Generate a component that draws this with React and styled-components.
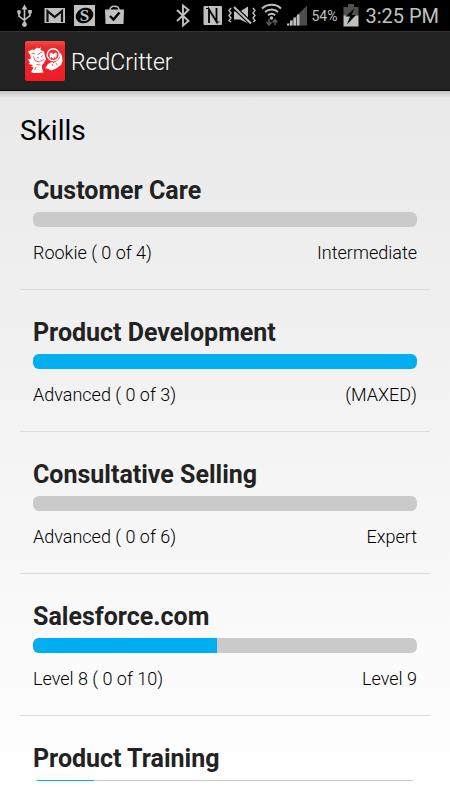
import React from 'react'
import styled, { createGlobalStyle } from 'styled-components'

const skills = [
  { name: 'Customer Care', level: 'Rookie ( 0 of 4)', next: 'Intermediate', percent: 0 },
  { name: 'Product Development', level: 'Advanced ( 0 of 3)', next: '(MAXED)', percent: 100 },
  { name: 'Consultative Selling', level: 'Advanced ( 0 of 6)', next: 'Expert', percent: 0 },
  { name: 'Salesforce.com', level: 'Level 8 ( 0 of 10)', next: 'Level 9', percent: 48 },
  { name: 'Product Training', level: '', next: '', percent: 16 },
]

const Glyph = ({ width, children }) => (
  <ScGlyph width={width} height="31" viewBox={`0 0 ${width} 31`} aria-hidden="true">
    {children}
  </ScGlyph>
)

const UsbIcon = () => (
  <Glyph width={21}>
    <path d="M10.500 24V8M5 12v4l5.500 4.500M16 12v3.500l-5.500 4.500" fill="none" stroke="#c0c0c0" strokeWidth="1.600" />
    <path d="M7.500 9.500l3-5 3 5z" />
    <circle cx="10.500" cy="24.500" r="2.400" />
    <circle cx="5" cy="12" r="1.900" />
    <path d="M14.200 10h3.600v3.600h-3.600z" />
  </Glyph>
)

const MailIcon = () => (
  <Glyph width={21}>
    <path d="M.5 8h20.500v15H.5z" />
    <path d="M3.500 22V11l7.200 6L18 11v11" fill="none" stroke="#111" strokeWidth="2.200" />
  </Glyph>
)

const SIcon = () => (
  <Glyph width={21}>
    <path d="M0 5h21v21H0z" />
    <ellipse cx="10.500" cy="15.500" rx="9" ry="7.500" fill="#000" transform="rotate(-25 10.500 15.500)" />
    <ScGlyphText x="10.500" y="21" textAnchor="middle">S</ScGlyphText>
  </Glyph>
)

const BagIcon = () => (
  <Glyph width={21}>
    <path d="M1 9.500h19L19.500 24h-18z" />
    <path d="M6 10c0-5 9-5 9 0" fill="none" stroke="#c0c0c0" strokeWidth="1.500" />
    <path d="M6 16l3.500 3.500 6-7" fill="none" stroke="#000" strokeWidth="2.400" />
  </Glyph>
)

const BluetoothIcon = () => (
  <Glyph width={26}>
    <path d="M4 10l11.500 11-5.500 4.500v-20l5.500 4.500L4 21" fill="none" stroke="#c0c0c0" strokeWidth="1.900" />
  </Glyph>
)

const NfcIcon = () => (
  <Glyph width={20}>
    <rect x=".5" y="6" width="18.500" height="19" rx="1" />
    <path d="M6 23V9.500l7.500 12V8" fill="none" stroke="#000" strokeWidth="1.800" />
    <path d="M3 8.500h3M13.500 22h3" fill="none" stroke="#000" strokeWidth="1" />
  </Glyph>
)

const VibrateIcon = () => (
  <Glyph width={30}>
    <path d="M7 11.500h6l8-5v17l-8-4H7z" />
    <path d="M7.500 7.500L24 23.500" stroke="#000" strokeWidth="4.500" />
    <path d="M7 7l17 16.500" stroke="#c0c0c0" strokeWidth="2" />
    <path d="M4 8L2 10.500 4 13l-2 2.500L4 18l-2 2.500L4 22M26 8l2 2.500-2 2.500 2 2.500-2 2.500 2 2.500-2 1.500" fill="none" stroke="#c0c0c0" strokeWidth="1.400" />
  </Glyph>
)

const WifiIcon = () => (
  <Glyph width={22}>
    <path d="M1 8.500c5.500-5 14-5 19 0M4 12c4-3.500 9.500-3.500 13 0M7 15.200c2.500-2 5-2 7.200 0" fill="none" stroke="#c0c0c0" strokeWidth="2" />
    <circle cx="10.500" cy="18" r="1.700" />
    <path d="M8 19v5M5.500 22L8 25l2.500-3M14 25v-5M11.500 22.500L14 19.500l2.500 3" fill="none" stroke="#5c5c5c" strokeWidth="1.500" />
  </Glyph>
)

const SignalIcon = () => (
  <Glyph width={20}>
    <path d="M0 25.500L20 5.500v20z" fill="#4c4c4c" />
    <path d="M0 25.500v-2h2v2zM3 25.500v-5h2.500v5zM6.500 25.500v-8H9v8zM10 25.500v-11h2.500v11z" />
  </Glyph>
)

const BatteryIcon = () => (
  <Glyph width={20}>
    <path d="M7 4h6v3h4.500v9h-15V7H7z" fill="#505050" />
    <path d="M2.500 15.500h15v11h-15z" />
    <path d="M13.500 8.500L4.500 16.500h4.500L6 24.500l9-9.500h-4.500z" fill="#000" />
  </Glyph>
)

const Logo = () => (
  <ScLogo viewBox="0 0 40 40" role="img" aria-label="RedCritter logo">
    <defs>
      <linearGradient id="badge" x1="0" y1="0" x2="0" y2="1">
        <stop offset="0" stopColor="#f0504e" />
        <stop offset=".15" stopColor="#ea2a2e" />
        <stop offset="1" stopColor="#ee1c25" />
      </linearGradient>
    </defs>
    <rect width="40" height="40" rx="2" fill="url(#badge)" />
    <g fill="#fff">
      <path d="M3 10.500l4.500-2L9 9l3-2.500 1 1 3-1-.5 2.500 3.500 1.500 1 4.500 1 3.500-2.500 4-1.500 1.500v3.500l1.500 4-4.500.500H8.500l-2.500-1 2.500-4.500-2.500-1 2-1.500-4.500-1 1.500-1.500-2-3 3-1L5 13.500z" />
      <path d="M20 27.500l3-4.500 3.500-2 2 1 2.500-1.500 3-2.500 1-2-1.500-2L35.500 12l1.500 3 .5 5-1.500 4-4 3-5.500 2.500-4.500-2z" />
    </g>
    <circle cx="28.200" cy="13.800" r="6" fill="#ee3338" stroke="#fff" strokeWidth="1.400" />
    <path d="M24.500 12.500l1.500-1 2.200 1.500 2.500-1.500 1.300 1-1 5-1.500-1.500-1.300 2-1.700-2-1.500 1.500z" fill="#fff" />
    <g fill="none" stroke="#e6393d" strokeWidth=".8">
      <path d="M6.500 12l3.500 1M12.500 13.500l4.500-2.500M12 16.500l2 .500M16 16l2-1.500" />
      <path d="M8.500 15.500l1.500 4 4 1.500 5-2.500M11.500 23.500l4 .500M9.500 29l1.500-3" />
      <path d="M27 23l1 2M31 22l1 2" />
    </g>
  </ScLogo>
)

const SkillRow = ({ skill }) => (
  <ScRow>
    <ScSkillName>{skill.name}</ScSkillName>
    <ScBar value={skill.percent} max="100" aria-label={skill.name} />
    <ScLevels>
      <span>{skill.level}</span>
      <span>{skill.next}</span>
    </ScLevels>
  </ScRow>
)

const App = () => {
  return (
    <>
      <GlobalStyle />
      <ScPage>
        <ScStatusBar>
          <ScNotifications>
            <UsbIcon />
            <MailIcon />
            <SIcon />
            <BagIcon />
          </ScNotifications>
          <ScSystem>
            <BluetoothIcon />
            <NfcIcon />
            <VibrateIcon />
            <WifiIcon />
            <SignalIcon />
            <ScPercent>54%</ScPercent>
            <BatteryIcon />
            <ScClock>3:25 PM</ScClock>
          </ScSystem>
        </ScStatusBar>
        <ScHeader>
          <Logo />
          <ScAppName>RedCritter</ScAppName>
        </ScHeader>
        <ScMain>
          <ScTitle>Skills</ScTitle>
          <ScList>
            {skills.map((skill) => (
              <SkillRow key={skill.name} skill={skill} />
            ))}
          </ScList>
        </ScMain>
      </ScPage>
    </>
  )
}

const GlobalStyle = createGlobalStyle`
  * {
    box-sizing: border-box;
  }
  body {
    margin: 0;
    font-family: Roboto, "Liberation Sans", sans-serif;
  }
`

const ScPage = styled.div`
  display: flex;
  flex-direction: column;
  height: 100vh;
  overflow: hidden;
`

const ScStatusBar = styled.div`
  display: flex;
  justify-content: space-between;
  align-items: center;
  height: 31px;
  padding: 0 11px 0 14px;
  background: #000;
  color: #c0c0c0;
`

const ScNotifications = styled.div`
  display: flex;
  gap: 9px;
`

const ScSystem = styled.div`
  display: flex;
  align-items: center;
  gap: 4px;
`

const ScGlyph = styled.svg`
  display: block;
  flex: none;
  fill: #c0c0c0;
`

const ScGlyphText = styled.text`
  font-family: "Liberation Serif", serif;
  font-weight: 700;
  font-size: 17px;
`

const ScPercent = styled.span`
  padding-top: 2px;
  font-size: 14px;
  line-height: 29px;
`

const ScClock = styled.span`
  padding-top: 2px;
  font-size: 20px;
  line-height: 29px;
`

const ScHeader = styled.header`
  display: flex;
  align-items: center;
  flex: none;
  gap: 6px;
  height: 60px;
  padding: 0 25px;
  background: #222;
  border-top: 1px solid #333;
  border-bottom: 1px solid #0c0c0c;
`

const ScLogo = styled.svg`
  width: 40px;
  height: 40px;
`

const ScAppName = styled.span`
  padding-top: 4px;
  color: #fff;
  font-weight: 300;
  font-size: 23px;
  line-height: 28px;
`

const ScMain = styled.main`
  display: flex;
  flex-direction: column;
  flex: 1;
  min-height: 0;
  padding: 22px 20px 19px;
  background:
    linear-gradient(rgba(0, 0, 0, 0.16), rgba(0, 0, 0, 0)) 0 0 / 100% 7px no-repeat,
    linear-gradient(#e9e9e9, #fff);
`

const ScTitle = styled.h1`
  margin: 0;
  color: #000;
  font-weight: 400;
  font-size: 28px;
  line-height: 35px;
`

const ScList = styled.ul`
  flex: 1;
  min-height: 0;
  margin: 0;
  padding: 0;
  overflow: hidden;
  list-style: none;
`

const ScRow = styled.li`
  padding: 28px 13px 24px;
  border-bottom: 1px solid #dcdcdc;
`

const ScSkillName = styled.h2`
  margin: 0 0 6px;
  color: #222;
  font-weight: 700;
  font-size: 25px;
  line-height: 30px;
`

const ScBar = styled.progress`
  display: block;
  width: 100%;
  height: 15px;
  border: 0;
  border-radius: 6px;
  overflow: hidden;
  appearance: none;
  background: #cacaca;

  &::-webkit-progress-bar {
    background: #cacaca;
  }
  &::-webkit-progress-value {
    background: #02aef0;
  }
`

const ScLevels = styled.div`
  display: flex;
  justify-content: space-between;
  min-height: 24px;
  margin-top: 14px;
  color: #000;
  font-weight: 300;
  font-size: 18px;
  line-height: 24px;
`

export default App
